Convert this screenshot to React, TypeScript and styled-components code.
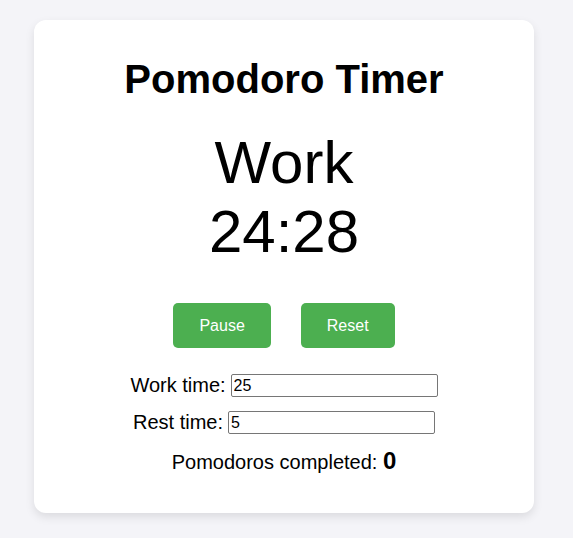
import React, { useState } from "react";
import styled, { createGlobalStyle } from "styled-components";

const GlobalStyle = createGlobalStyle`
  body {
    margin: 0;
    background: #f4f4f8;
    font-family: "Liberation Sans", Arial, sans-serif;
    color: #000;
  }
`;

const Page = styled.div`
  display: flex;
  padding: 20px 0 25px 34px;
`;

const Card = styled.div`
  width: 500px;
  box-sizing: border-box;
  padding: 36px 20px 37px;
  background: #fff;
  border-radius: 12px;
  box-shadow: 0 4px 10px rgba(0, 0, 0, 0.1);
  text-align: center;
`;

const Title = styled.h1`
  margin: 0 0 26px;
  font-size: 40px;
  line-height: 46px;
  font-weight: 700;
`;

const BigLine = styled.div`
  font-size: 60px;
  line-height: 69px;
`;

const ButtonRow = styled.div`
  display: flex;
  justify-content: center;
  gap: 30px;
  margin-top: 37px;
`;

const Button = styled.button`
  padding: 13px 26px;
  border: none;
  border-radius: 5px;
  background: #4caf50;
  color: #fff;
  font-family: inherit;
  font-size: 16px;
  line-height: 19px;
  cursor: pointer;
`;

const Settings = styled.div`
  display: flex;
  flex-direction: column;
  gap: 14px;
  margin-top: 26px;
`;

const Row = styled.label`
  display: flex;
  align-items: center;
  justify-content: center;
  gap: 5px;
  font-size: 20px;
  line-height: 23px;
`;

const Input = styled.input`
  width: 207px;
  height: 23px;
  box-sizing: border-box;
  padding: 1px 2px;
  border: 1px solid #767676;
  border-radius: 2px;
  font-family: inherit;
  font-size: 16px;
  color: #000;
`;

const Counter = styled.p`
  margin: 13px 0 0;
  font-size: 20px;
  line-height: 27px;
`;

const Count = styled.strong`
  font-size: 24px;
`;

export default function App() {
  const [work, setWork] = useState("25");
  const [rest, setRest] = useState("5");
  const [running, setRunning] = useState(true);

  return (
    <Page>
      <GlobalStyle />
      <Card>
        <Title>Pomodoro Timer</Title>
        <BigLine>Work</BigLine>
        <BigLine>24:28</BigLine>
        <ButtonRow>
          <Button onClick={() => setRunning(!running)}>
            {running ? "Pause" : "Start"}
          </Button>
          <Button>Reset</Button>
        </ButtonRow>
        <Settings>
          <Row>
            Work time:
            <Input type="text" value={work} onChange={(e) => setWork(e.target.value)} />
          </Row>
          <Row>
            Rest time:
            <Input type="text" value={rest} onChange={(e) => setRest(e.target.value)} />
          </Row>
        </Settings>
        <Counter>
          Pomodoros completed: <Count>0</Count>
        </Counter>
      </Card>
    </Page>
  );
}
